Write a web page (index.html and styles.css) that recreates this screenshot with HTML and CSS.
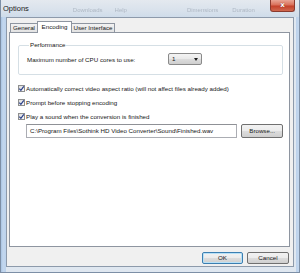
FILE: index.html
```html
<!DOCTYPE html>
<html>
<head>
<meta charset="utf-8">
<link rel="stylesheet" href="styles.css">
</head>
<body>
<div class="window">
  <div class="titlebar">
    <span class="title">Options</span>
    <span class="ghost g1">Downloads</span>
    <span class="ghost g2">Help</span>
    <span class="ghost g3">Dimensions</span>
    <span class="ghost g4">Duration</span>
    <div class="close">x</div>
  </div>
  <div class="client">
    <div class="tabs">
      <div class="tab t-general">General</div>
      <div class="tab tab-active t-encoding">Encoding</div>
      <div class="tab t-ui">User Interface</div>
    </div>
    <div class="panel">
      <fieldset class="group">
        <legend class="legend">Performance</legend>
        <div class="cpu-row">
          <span class="cpu-label">Maximum number of CPU cores to use:</span>
          <div class="combo"><span>1</span><i class="arrow"></i></div>
        </div>
      </fieldset>
      <div class="check-row first">
        <span class="cb"><svg viewBox="0 0 7 7" width="7" height="7"><path d="M1.3 3.6 L2.9 5.3 L5.8 1.4" fill="none" stroke="#2a3f8a" stroke-width="1.2"/></svg></span>
        <span>Automatically correct video aspect ratio (will not affect files already added)</span>
      </div>
      <div class="check-row">
        <span class="cb"><svg viewBox="0 0 7 7" width="7" height="7"><path d="M1.3 3.6 L2.9 5.3 L5.8 1.4" fill="none" stroke="#2a3f8a" stroke-width="1.2"/></svg></span>
        <span>Prompt before stopping encoding</span>
      </div>
      <div class="check-row">
        <span class="cb"><svg viewBox="0 0 7 7" width="7" height="7"><path d="M1.3 3.6 L2.9 5.3 L5.8 1.4" fill="none" stroke="#2a3f8a" stroke-width="1.2"/></svg></span>
        <span>Play a sound when the conversion is finished</span>
      </div>
      <div class="path-row">
        <div class="field">C:\Program Files\Sothink HD Video Converter\Sound\Finished.wav</div>
        <div class="btn browse">Browse...</div>
      </div>
    </div>
    <div class="buttons">
      <div class="btn ok">OK</div>
      <div class="btn cancel">Cancel</div>
    </div>
  </div>
</div>
</body>
</html>
```
FILE: styles.css
```css
html, body {
  margin: 0;
  padding: 0;
  background: #ffffff;
}
body {
  width: 300px;
  height: 273px;
  overflow: hidden;
  font-family: "Liberation Sans", Arial, sans-serif;
  font-size: 6.2px;
  color: #161616;
}
.window {
  width: 300px;
  height: 273px;
  box-sizing: border-box;
  display: flex;
  flex-direction: column;
  padding: 0 5px 5px 5px;
  background: linear-gradient(to right, #a9c4e3 0px, #c3d7ee 2px, #bcd2ec 5px, #dfe7f0 5px, #dfe7f0 295px, #bcd2ec 295px, #c3d7ee 298px, #a9c4e3 300px);
  border-left: 1px solid #7d8fa6;
  border-right: 1px solid #7d8fa6;
  border-bottom: 1px solid #7d8fa6;
}
.titlebar {
  height: 17px;
  margin: 0 -5px;
  padding: 0 5px 0 2px;
  display: flex;
  align-items: flex-start;
  background: linear-gradient(to bottom, #e4e9ef, #d9e2ec 60%, #cfdcea);
}
.title {
  font-size: 7.5px;
  line-height: 8px;
  margin-top: 5px;
  color: #1a1a1a;
}
.ghost {
  font-size: 6px;
  line-height: 6px;
  margin-top: 7px;
  color: #aeb8c4;
  filter: blur(0.6px);
}
.g1 { margin-left: 44px; }
.g2 { margin-left: 12px; }
.g3 { margin-left: 60px; }
.g4 { margin-left: 14px; }
.close {
  margin-left: auto;
  margin-right: -1px;
  width: 25px;
  height: 12px;
  box-sizing: border-box;
  border: 1px solid #8a3a2e;
  border-top: none;
  border-radius: 0 0 3px 3px;
  background: linear-gradient(to bottom, #e9a595 0%, #d9705a 45%, #c4412a 55%, #d0684f 100%);
  color: #ffffff;
  font-family: "DejaVu Sans", sans-serif;
  font-weight: bold;
  font-size: 7px;
  line-height: 10px;
  text-align: center;
  text-shadow: 0 0 1px #6b1f12;
}
.client {
  flex: 1;
  display: flex;
  flex-direction: column;
  background: #f0f0f0;
  border: 1px solid #8d9aab;
  padding: 3px 3px 0 2px;
}
.tabs {
  height: 11px;
  display: flex;
  align-items: flex-end;
  padding-left: 1px;
  position: relative;
  z-index: 1;
}
.tab {
  box-sizing: border-box;
  height: 9px;
  border: 1px solid #8e95a0;
  border-bottom: none;
  background: linear-gradient(to bottom, #f2f2f2, #e3e3e3);
  line-height: 8px;
  text-align: center;
  font-size: 6.2px;
}
.t-general { width: 27px; border-right: none; }
.t-encoding { width: 35px; }
.t-ui { width: 43px; border-left: none; }
.tab-active {
  height: 12px;
  margin-bottom: -1px;
  background: #ffffff;
  line-height: 9px;
}
.panel {
  height: 215px;
  box-sizing: border-box;
  background: #ffffff;
  border: 1px solid #8e95a0;
  padding: 0 6px 0 8px;
  display: flex;
  flex-direction: column;
}
.group {
  margin: 8px 0 0 0;
  padding: 4px 8px 9px 8px;
  border: 1px solid #d5dfe5;
  border-radius: 2px;
  min-width: 0;
}
.legend {
  padding: 0 1px;
  margin-left: 2px;
  line-height: 8px;
  font-size: 6.2px;
}
.cpu-row {
  display: flex;
  align-items: center;
  height: 12px;
}
.cpu-label {
  width: 141px;
}
.combo {
  width: 34px;
  height: 12px;
  box-sizing: border-box;
  border: 1px solid #8a8a8a;
  border-radius: 2px;
  background: linear-gradient(to bottom, #f4f4f4, #e8e8e8 50%, #dcdcdc 51%, #cfcfcf);
  display: flex;
  align-items: center;
  padding: 0 3px 0 3px;
  line-height: 10px;
}
.combo span { flex: 1; }
.arrow {
  width: 0;
  height: 0;
  border-left: 2px solid transparent;
  border-right: 2px solid transparent;
  border-top: 3px solid #1e1e1e;
}
.check-row {
  height: 14px;
  display: flex;
  align-items: center;
}
.check-row.first { margin-top: 6px; }
.cb {
  width: 7px;
  height: 7px;
  box-sizing: border-box;
  border: 1px solid #8e8f8f;
  background: linear-gradient(135deg, #dcdcdc, #fbfbfb);
  margin-right: 1px;
  display: flex;
  align-items: center;
  justify-content: center;
  overflow: visible;
}
.cb svg { flex: none; }
.path-row {
  margin-top: 1px;
  margin-left: 8px;
  display: flex;
  align-items: center;
  height: 14px;
}
.field {
  width: 213px;
  height: 14px;
  box-sizing: border-box;
  border: 1px solid #abadb3;
  border-top-color: #8f9196;
  background: #ffffff;
  line-height: 12px;
  padding-left: 3px;
  white-space: nowrap;
  overflow: hidden;
}
.btn {
  box-sizing: border-box;
  border: 1px solid #707070;
  border-radius: 2px;
  background: linear-gradient(to bottom, #f2f2f2, #ebebeb 50%, #dddddd 51%, #cfcfcf);
  text-align: center;
  font-size: 6.2px;
}
.browse {
  margin-left: 4px;
  width: 42px;
  height: 14px;
  line-height: 12px;
}
.buttons {
  display: flex;
  justify-content: flex-end;
  gap: 4px;
  margin-top: 5px;
  padding-right: 1px;
}
.ok, .cancel {
  height: 12px;
  line-height: 10px;
}
.ok {
  width: 41px;
  border-color: #3c7fb1;
  box-shadow: inset 0 0 0 1px #b8e1f7;
}
.cancel { width: 42px; }
```
